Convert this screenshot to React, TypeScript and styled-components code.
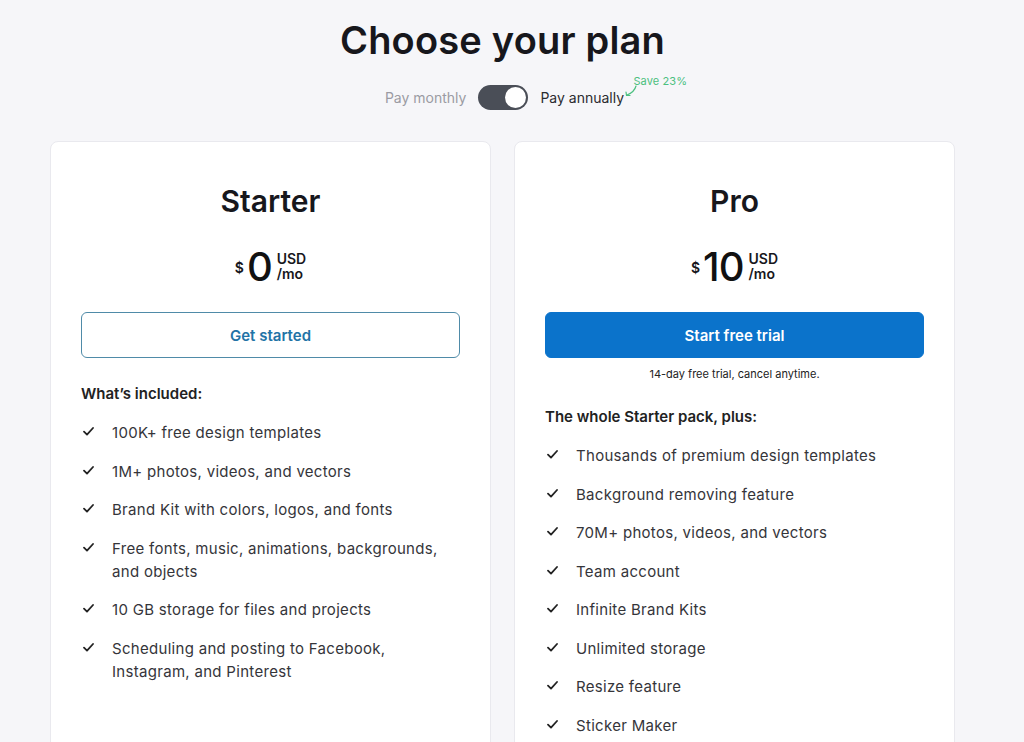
import React from "react";
import styled, { createGlobalStyle } from "styled-components";

const Global = createGlobalStyle`
  html, body { margin: 0; padding: 0; }
  body {
    background: #f6f6f9;
    font-family: Inter, "Noto Sans", Arial, sans-serif;
    color: #222;
    -webkit-font-smoothing: antialiased;
  }
`;

const Page = styled.div`
  width: 905px;
  margin-left: 50px;
  padding-top: 20px;
  display: flex;
  flex-direction: column;
  align-items: center;
`;

const Title = styled.h1`
  margin: 0;
  font-size: 38px;
  line-height: 40px;
  font-weight: 600;
  color: #17171c;
  letter-spacing: 0.2px;
`;

const ToggleRow = styled.div`
  margin-top: 25px;
  margin-left: 4px;
  display: flex;
  align-items: center;
  gap: 12px;
  font-size: 14px;
`;

const Period = styled.span<{ $active?: boolean }>`
  color: ${(p) => (p.$active ? "#2b2b30" : "#9b9ba3")};
  position: relative;
`;

const Switch = styled.div`
  width: 50px;
  height: 25px;
  border-radius: 13px;
  background: #4a4e57;
  display: flex;
  align-items: center;
  justify-content: flex-end;
  padding: 0 2px;
  box-sizing: border-box;
`;

const Knob = styled.div`
  width: 21px;
  height: 21px;
  border-radius: 50%;
  background: #fff;
`;

const Save = styled.span`
  position: absolute;
  left: 93px;
  top: -15px;
  font-size: 11px;
  letter-spacing: 0.1px;
  color: #4cc080;
  white-space: nowrap;
  display: flex;
  align-items: flex-end;
`;

const SaveArrow = styled.svg`
  position: absolute;
  left: -9px;
  top: 11px;
`;

const Cards = styled.div`
  margin-top: 31px;
  width: 100%;
  display: grid;
  grid-template-columns: 1fr 1fr;
  gap: 23px;
`;

const Card = styled.section`
  background: #fff;
  border: 1px solid #e9e9ee;
  border-radius: 8px;
  padding: 41px 30px 60px;
  min-height: 660px;
  display: flex;
  flex-direction: column;
`;

const PlanName = styled.h2`
  margin: 0;
  text-align: center;
  font-size: 30px;
  line-height: 36px;
  font-weight: 600;
  color: #17171c;
`;

const Price = styled.div`
  margin-top: 28px;
  display: flex;
  justify-content: center;
  align-items: center;
  gap: 3px;
  height: 40px;
`;

const Currency = styled.span`
  font-size: 14px;
  font-weight: 600;
  color: #17171c;
  align-self: center;
  margin-top: 1px;
`;

const Amount = styled.span`
  font-size: 40px;
  line-height: 40px;
  font-weight: 500;
  color: #111;
  letter-spacing: -1px;
`;

const Unit = styled.span`
  display: flex;
  flex-direction: column;
  font-size: 14px;
  line-height: 15px;
  font-weight: 600;
  color: #17171c;
  margin-left: 2px;
  margin-top: -2px;
`;

const Button = styled.button<{ $primary?: boolean }>`
  margin-top: 25px;
  height: 46px;
  width: 100%;
  border-radius: 6px;
  font-family: inherit;
  font-size: 15px;
  font-weight: 600;
  cursor: pointer;
  border: 1px solid ${(p) => (p.$primary ? "#0b73cb" : "#4f8ba8")};
  background: ${(p) => (p.$primary ? "#0b73cb" : "#fff")};
  color: ${(p) => (p.$primary ? "#fff" : "#2273a6")};
`;

const Note = styled.p`
  margin: 8px 0 0;
  text-align: center;
  font-size: 11px;
  line-height: 16px;
  color: #222;
`;

const Heading = styled.h3<{ $top: number }>`
  margin: ${(p) => p.$top}px 0 17px;
  font-size: 15px;
  line-height: 20px;
  font-weight: 600;
  color: #222;
`;

const List = styled.ul`
  margin: 0;
  padding: 0;
  list-style: none;
  display: flex;
  flex-direction: column;
  gap: 15.5px;
`;

const Item = styled.li`
  display: grid;
  grid-template-columns: 31px 1fr;
  font-size: 15px;
  line-height: 23px;
  letter-spacing: 0.3px;
  color: #35353a;
`;

const Check = styled.svg`
  margin-top: 6px;
  margin-left: 2px;
`;

const CheckIcon = () => (
  <Check width="11" height="9" viewBox="0 0 11 9" fill="none">
    <path d="M1 4.6 L4 7.6 L10 1" stroke="#222" strokeWidth="1.8" strokeLinecap="round" strokeLinejoin="round" />
  </Check>
);

type Plan = {
  name: string;
  amount: string;
  cta: string;
  primary?: boolean;
  note?: string;
  heading: string;
  items: string[];
};

const plans: Plan[] = [
  {
    name: "Starter",
    amount: "0",
    cta: "Get started",
    heading: "What’s included:",
    items: [
      "100K+ free design templates",
      "1M+ photos, videos, and vectors",
      "Brand Kit with colors, logos, and fonts",
      "Free fonts, music, animations, backgrounds, and objects",
      "10 GB storage for files and projects",
      "Scheduling and posting to Facebook, Instagram, and Pinterest",
    ],
  },
  {
    name: "Pro",
    amount: "10",
    cta: "Start free trial",
    primary: true,
    note: "14-day free trial, cancel anytime.",
    heading: "The whole Starter pack, plus:",
    items: [
      "Thousands of premium design templates",
      "Background removing feature",
      "70M+ photos, videos, and vectors",
      "Team account",
      "Infinite Brand Kits",
      "Unlimited storage",
      "Resize feature",
      "Sticker Maker",
    ],
  },
];

export default function App() {
  return (
    <>
      <Global />
      <Page>
        <Title>Choose your plan</Title>
        <ToggleRow>
          <Period>Pay monthly</Period>
          <Switch>
            <Knob />
          </Switch>
          <Period $active>
            Pay annually
            <Save>
              <SaveArrow width="14" height="12" viewBox="0 0 14 12" fill="none">
                <path d="M12 1 C11 5 8 8 3 10" stroke="#4cc080" strokeWidth="1.2" strokeLinecap="round" />
                <path d="M2 7 L2.5 10.5 L6 10.5" stroke="#4cc080" strokeWidth="1.2" strokeLinecap="round" strokeLinejoin="round" />
              </SaveArrow>
              Save 23%
            </Save>
          </Period>
        </ToggleRow>
        <Cards>
          {plans.map((p) => (
            <Card key={p.name}>
              <PlanName>{p.name}</PlanName>
              <Price>
                <Currency>$</Currency>
                <Amount>{p.amount}</Amount>
                <Unit>
                  <span>USD</span>
                  <span>/mo</span>
                </Unit>
              </Price>
              <Button $primary={p.primary}>{p.cta}</Button>
              {p.note && <Note>{p.note}</Note>}
              <Heading $top={p.note ? 25 : 26}>{p.heading}</Heading>
              <List>
                {p.items.map((it) => (
                  <Item key={it}>
                    <CheckIcon />
                    <span>{it}</span>
                  </Item>
                ))}
              </List>
            </Card>
          ))}
        </Cards>
      </Page>
    </>
  );
}
